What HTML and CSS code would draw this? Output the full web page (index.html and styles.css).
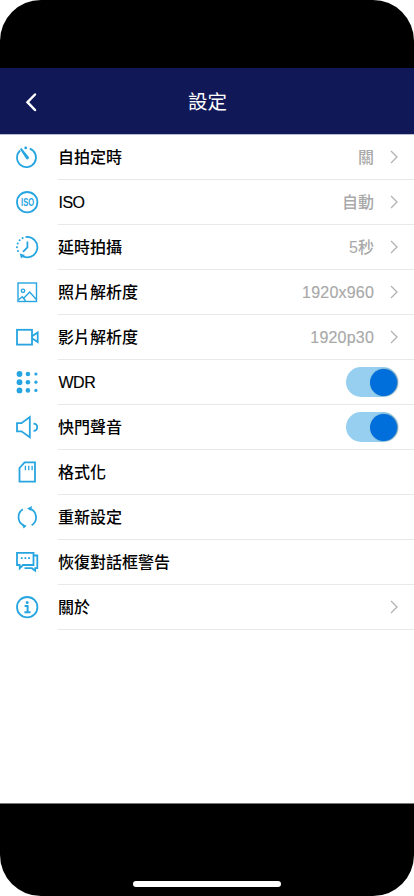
FILE: index.html
```html
<!DOCTYPE html>
<html lang="zh-Hant">
<head>
    <meta charset="UTF-8">
    <meta name="viewport" content="width=device-width, initial-scale=1.0">
    <title>設定</title>
    <link rel="stylesheet" href="styles.css">
</head>
<body>
    <div class="phone">
        <header class="header">
            <svg class="back" viewBox="0 0 12 20"><path d="M10 2.5L2.5 10.2L10 18"/></svg>
            <h1>設定</h1>
        </header>

        <main class="settings">
            <div class="row">
                <svg class="icon" viewBox="0 0 24 24"><path d="M5.2 5.5A9.5 9.5 0 1 0 14.8 3.7"/><circle class="fill" cx="10.7" cy="2.9" r="1.4"/><path class="fill" d="M4.9 4.1L6.5 2.9L13.6 11.7A1.5 1.5 0 0 1 11.1 13.7Z"/></svg>
                <div class="content"><span class="label">自拍定時</span><span class="value">關</span><svg class="arrow" viewBox="0 0 8 14"><path d="M1 1L7 7L1 13"/></svg></div>
            </div>
            <div class="row">
                <svg class="icon" viewBox="0 0 24 24"><circle cx="12.2" cy="12.2" r="10.2"/><text x="6.1" y="16.1" textLength="13" lengthAdjust="spacingAndGlyphs">ISO</text></svg>
                <div class="content"><span class="label latin">ISO</span><span class="value">自動</span><svg class="arrow" viewBox="0 0 8 14"><path d="M1 1L7 7L1 13"/></svg></div>
            </div>
            <div class="row">
                <svg class="icon" viewBox="0 0 24 24"><path d="M10.5 2.1A10.2 10.2 0 1 1 6.3 20.5"/><path d="M12.4 6.5V12.3L8 16.8"/><path class="fill" d="M4.8 18.6L10 20.1L6 23.4Z"/><g class="fill"><circle cx="7.6" cy="3.1" r="1.05"/><circle cx="4.6" cy="5.3" r="1.05"/><circle cx="2.7" cy="8.5" r="1.05"/><circle cx="2" cy="12.2" r="1.05"/><circle cx="3" cy="16" r="1.05"/></g></svg>
                <div class="content"><span class="label">延時拍攝</span><span class="value">5秒</span><svg class="arrow" viewBox="0 0 8 14"><path d="M1 1L7 7L1 13"/></svg></div>
            </div>
            <div class="row">
                <svg class="icon thin" viewBox="0 0 24 24"><rect x="3" y="3" width="18.5" height="18.5"/><circle cx="8" cy="10.8" r="1.7"/><path d="M3.3 20L7.3 16.8L10.7 21M8.7 18.2L14.7 12L21.3 19.5"/></svg>
                <div class="content"><span class="label">照片解析度</span><span class="value digits">1920x960</span><svg class="arrow" viewBox="0 0 8 14"><path d="M1 1L7 7L1 13"/></svg></div>
            </div>
            <div class="row">
                <svg class="icon" viewBox="0 0 24 24"><rect x="2" y="4.8" width="15" height="14.8"/><path d="M17 11.2L22.7 7.4V17L17 13.2"/></svg>
                <div class="content"><span class="label">影片解析度</span><span class="value digits">1920p30</span><svg class="arrow" viewBox="0 0 8 14"><path d="M1 1L7 7L1 13"/></svg></div>
            </div>
            <div class="row">
                <svg class="icon" viewBox="0 0 24 24"><g class="fill"><circle cx="4.5" cy="4" r="2.9"/><circle cx="4.5" cy="12.2" r="2.9"/><circle cx="4.5" cy="20.4" r="2.9"/><circle cx="12.9" cy="4" r="2.3"/><circle cx="12.9" cy="12.2" r="2.3"/><circle cx="12.9" cy="20.4" r="2.3"/><circle cx="20.9" cy="4" r="1.6"/><circle cx="20.9" cy="12.2" r="1.6"/><circle cx="20.9" cy="20.4" r="1.6"/></g></svg>
                <div class="content"><span class="label latin">WDR</span><span class="switch"></span></div>
            </div>
            <div class="row">
                <svg class="icon" viewBox="0 0 24 24"><path d="M2 8.2H6.5L14.8 2V22.2L6.5 16.3H2Z"/><path d="M18.5 8.6C23.4 8.8 23.4 15.6 18.5 15.8"/></svg>
                <div class="content"><span class="label">快門聲音</span><span class="switch"></span></div>
            </div>
            <div class="row">
                <svg class="icon" viewBox="0 0 24 24"><path d="M4.5 8L9.6 2.3H20V21.7H4.5Z"/><path class="pins" d="M10.4 5.7V10.2M13.8 5.7V10.2M17.1 5.7V10.2"/></svg>
                <div class="content"><span class="label">格式化</span></div>
            </div>
            <div class="row">
                <svg class="icon" viewBox="0 0 24 24"><path d="M7.9 4.3A9.2 9.2 0 0 0 8.5 20.3M14.2 3.5A9.2 9.2 0 0 1 16.7 20.2"/><path class="fill" d="M12.1 3.4L17 1L16.2 6.1ZM11.6 20.7L6.6 18.5L8.7 23.4Z"/></svg>
                <div class="content"><span class="label">重新設定</span></div>
            </div>
            <div class="row">
                <svg class="icon" viewBox="0 0 24 24"><path d="M2 2.9H18.5V15H8L4.7 18.3V15H2Z"/><path d="M18.5 5.5H22.3V18.2H20.2V20.8L16.8 18.2H9.5"/><g class="fill"><rect x="5.8" y="7.2" width="1.8" height="1.8"/><rect x="9.5" y="7.2" width="1.8" height="1.8"/><rect x="13.2" y="7.2" width="1.8" height="1.8"/></g></svg>
                <div class="content"><span class="label">恢復對話框警告</span></div>
            </div>
            <div class="row">
                <svg class="icon" viewBox="0 0 24 24"><circle cx="12.2" cy="12.2" r="10.2"/><circle class="fill" cx="12.2" cy="7.5" r="1.5"/><path class="stem" d="M9.6 11H12.6V17M9.4 17.2H15.5"/></svg>
                <div class="content"><span class="label">關於</span><svg class="arrow" viewBox="0 0 8 14"><path d="M1 1L7 7L1 13"/></svg></div>
            </div>
        </main>

        <footer class="footer"><div class="home-bar"></div></footer>
    </div>
</body>
</html>
```

FILE: styles.css
```css
* {
    box-sizing: border-box;
}
body {
    margin: 0;
    background-color: #fff;
    font-family: "Liberation Sans", "Noto Sans CJK TC", sans-serif;
}
.phone {
    display: flex;
    flex-direction: column;
    height: 896px;
    padding-top: 68px;
    background-color: #000;
    border-radius: 41px;
    overflow: hidden;
}
.header {
    display: grid;
    grid-template-columns: 60px 1fr 60px;
    align-items: center;
    height: 67px;
    background-color: #101858;
    border-bottom: 1px solid #b8bad0;
    color: #fff;
}
.header h1 {
    margin: 0;
    padding: 2px 0 0 1px;
    font-size: 19.5px;
    font-weight: 400;
    line-height: 28px;
    text-align: center;
}
.back {
    width: 12px;
    height: 20px;
    margin: 2px 0 0 25px;
    fill: none;
    stroke: #fff;
    stroke-width: 2.5;
    stroke-linecap: round;
}
.settings {
    flex: 1;
    background-color: #fff;
}
.row {
    display: flex;
    align-items: center;
    height: 45px;
    padding-left: 15px;
}
.icon {
    width: 24px;
    height: 24px;
    margin-bottom: 2px;
    fill: none;
    stroke: #27a5e0;
    stroke-width: 1.8;
}
.icon text {
    fill: #27a5e0;
    stroke: none;
    font-size: 11px;
    font-weight: bold;
}
.icon .fill {
    fill: #27a5e0;
    stroke: none;
}
.thin {
    stroke-width: 1.4;
}
.pins {
    stroke-width: 1.3;
}
.stem {
    stroke-width: 2;
}
.content {
    display: flex;
    flex: 1;
    align-items: center;
    height: 45px;
    margin-left: 19px;
    padding-right: 16px;
    border-bottom: 1px solid #e8e8e8;
}
.label {
    flex: 1;
    padding-top: 2px;
    color: #000;
    font-size: 16px;
    font-weight: 500;
    line-height: 24px;
}
.latin {
    padding-left: 0.5px;
    letter-spacing: -0.5px;
    -webkit-text-stroke: 0.15px #000;
}
.value {
    padding-top: 2px;
    color: #a9a9a9;
    font-size: 16px;
    font-weight: 500;
    line-height: 24px;
}
.digits {
    letter-spacing: 0.2px;
    -webkit-text-stroke: 0.15px #a9a9a9;
}
.arrow {
    width: 8px;
    height: 14px;
    margin-left: 16px;
    fill: none;
    stroke: #b2b2b2;
    stroke-width: 1.3;
}
.switch {
    display: flex;
    justify-content: flex-end;
    width: 52px;
    height: 30px;
    padding: 2px 1px;
    background-color: #96cfef;
    border-radius: 15px;
}
.switch::after {
    content: "";
    width: 27px;
    height: 27px;
    background-color: #006fdc;
    border-radius: 50%;
    box-shadow: 1px 0 2px rgba(0, 60, 100, 0.5);
}
.footer {
    display: flex;
    align-items: flex-end;
    justify-content: center;
    height: 93px;
    padding-bottom: 9px;
    border-top: 1px solid #777;
}
.home-bar {
    width: 148px;
    height: 6px;
    background-color: #fff;
    border-radius: 3px;
}
```
